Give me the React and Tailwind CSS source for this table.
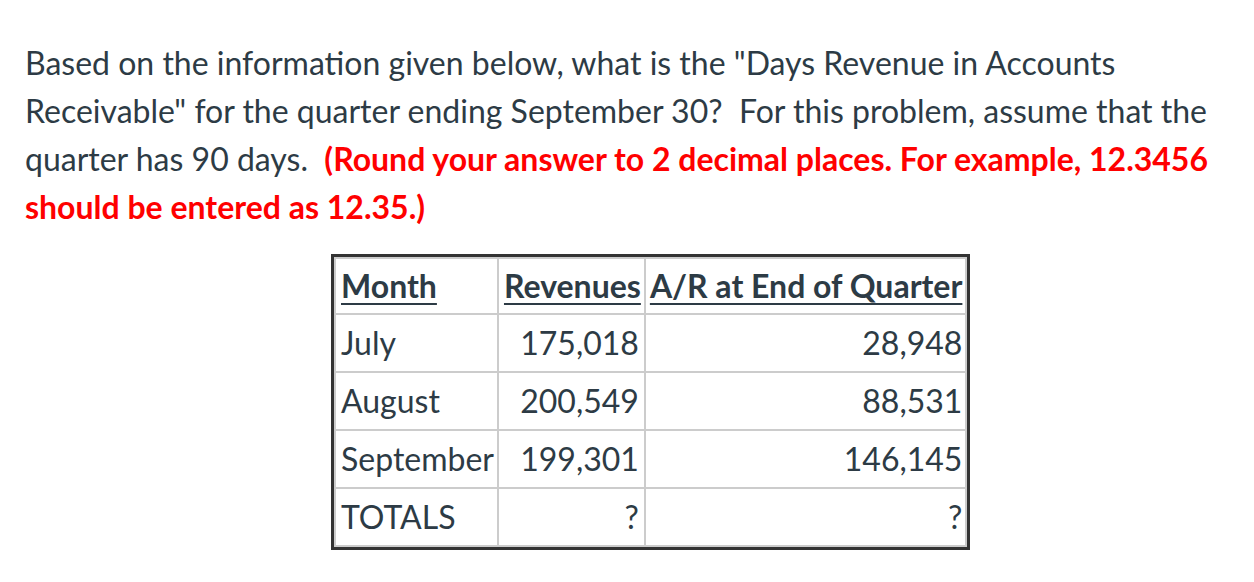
import React from 'react';

const rows = [
  { month: 'July', revenue: '175,018', ar: '28,948' },
  { month: 'August', revenue: '200,549', ar: '88,531' },
  { month: 'September', revenue: '199,301', ar: '146,145' },
  { month: 'TOTALS', revenue: '?', ar: '?' },
];

const App = () => {
  return (
    <div className="min-h-screen bg-white text-[#2d3b45] font-['Lato',_'Liberation_Sans',_sans-serif]">
      <div className="pl-[25px] pr-[10px] pt-[39px]">
        <p className="text-[32px] leading-[48px]">
          Based on the information given below, what is the "Days Revenue in Accounts Receivable" for the quarter
          ending September 30?{'\u00a0'} For this problem, assume that the quarter has 90 days.{'\u00a0'}{' '}
          <strong className="font-bold text-[#ff0000]">
            (Round your answer to 2 decimal places. For example, 12.3456 should be entered as 12.35.)
          </strong>
        </p>

        {/* data table */}
        <div className="mt-[23px] ml-[306px] inline-block border-[3px] border-[#333]">
          <table className="border-collapse text-[32px] leading-[38px]">
            <thead>
              <tr>
                <th className="border-2 border-[#ccc] border-r-[#333] border-r-[1.5px] py-[8px] pl-[5px] pr-[3px] text-left font-bold">
                  <span className="underline underline-offset-[5px] decoration-2">Month</span>
                </th>
                <th className="border-2 border-[#ccc] border-r-[#333] border-r-[1.5px] py-[8px] pl-[5px] pr-[3px] text-left font-bold">
                  <span className="underline underline-offset-[5px] decoration-2">Revenues</span>
                </th>
                <th className="border-2 border-[#ccc] py-[8px] pl-[4px] pr-[3px] text-left font-bold">
                  <span className="underline underline-offset-[5px] decoration-2">A/R at End of Quarter</span>
                </th>
              </tr>
            </thead>
            <tbody>
              {rows.map((r) => (
                <tr key={r.month}>
                  <td className="border-2 border-[#ccc] border-r-[#333] border-r-[1.5px] py-[9px] pl-[5px] pr-[3px] text-left">
                    {r.month}
                  </td>
                  <td className="border-2 border-[#ccc] border-r-[#333] border-r-[1.5px] py-[9px] pl-[5px] pr-[5px] text-right">
                    {r.revenue}
                  </td>
                  <td className="border-2 border-[#ccc] py-[9px] pl-[4px] pr-[3px] text-right">{r.ar}</td>
                </tr>
              ))}
            </tbody>
          </table>
        </div>
      </div>
    </div>
  );
};

export default App;
